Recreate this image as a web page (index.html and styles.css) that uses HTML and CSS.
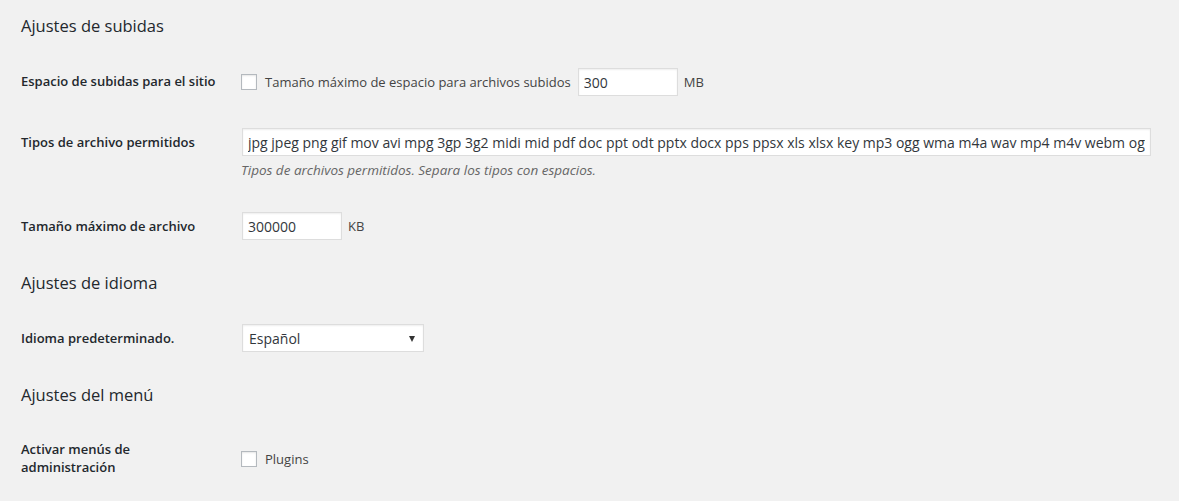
FILE: index.html
```html
<!DOCTYPE html>
<html lang="es">
<head>
<meta charset="utf-8">
<title>Ajustes de la red</title>
<link rel="stylesheet" href="styles.css">
</head>
<body>
<div class="wrap">
  <h2 class="section-title first">Ajustes de subidas</h2>
  <div class="form-table">
    <div class="row row-space">
      <div class="th">Espacio de subidas para el sitio</div>
      <div class="td td-inline">
        <label class="check-label"><input type="checkbox" class="checkbox"> Tamaño máximo de espacio para archivos subidos</label>
        <input type="text" class="text-input small" value="300">
        <span class="unit">MB</span>
      </div>
    </div>
    <div class="row row-types">
      <div class="th">Tipos de archivo permitidos</div>
      <div class="td">
        <input type="text" class="text-input large" value="jpg jpeg png gif mov avi mpg 3gp 3g2 midi mid pdf doc ppt odt pptx docx pps ppsx xls xlsx key mp3 ogg wma m4a wav mp4 m4v webm ogv wmv flv">
        <p class="description">Tipos de archivos permitidos. Separa los tipos con espacios.</p>
      </div>
    </div>
    <div class="row">
      <div class="th">Tamaño máximo de archivo</div>
      <div class="td td-inline">
        <input type="text" class="text-input small" value="300000">
        <span class="unit">KB</span>
      </div>
    </div>
  </div>

  <h2 class="section-title">Ajustes de idioma</h2>
  <div class="form-table">
    <div class="row">
      <div class="th">Idioma predeterminado.</div>
      <div class="td td-inline">
        <span class="select-wrap">
          <select class="select">
            <option>Español</option>
          </select>
          <span class="select-arrow"></span>
        </span>
      </div>
    </div>
  </div>

  <h2 class="section-title">Ajustes del menú</h2>
  <div class="form-table">
    <div class="row row-center">
      <div class="th">Activar menús de administración</div>
      <div class="td td-inline">
        <label class="check-label"><input type="checkbox" class="checkbox"> Plugins</label>
      </div>
    </div>
  </div>
</div>
</body>
</html>
```

FILE: styles.css
```css
html, body {
  margin: 0;
  padding: 0;
  background: #f1f1f1;
}

body {
  font-family: "Segoe UI", "Open Sans", "Noto Sans", sans-serif;
  font-size: 13px;
  line-height: 18px;
  color: #444;
}

.wrap {
  padding: 0 10px 0 21px;
}

.section-title {
  font-size: 16.5px;
  line-height: 23px;
  font-weight: 400;
  color: #23282d;
  margin: 14px 0 15px;
}

.form-table {
  display: flex;
  flex-direction: column;
}

.row {
  display: grid;
  grid-template-columns: 210px 1fr;
  min-height: 60px;
}

.th {
  width: 200px;
  padding: 20px 10px 20px 0;
  font-weight: 600;
  color: #23282d;
}

.td {
  padding: 15px 10px;
}

.td-inline {
  display: flex;
  align-items: center;
  align-self: start;
  height: 28px;
}

.row-space .td-inline {
  padding-top: 16px;
  padding-bottom: 17px;
}

.row-types .td {
  padding-bottom: 18px;
}

.row-center .th {
  padding-top: 20px;
  line-height: 17.7px;
}

.row-center .td-inline {
  align-self: start;
  padding-top: 24px;
  padding-bottom: 8px;
}

.check-label {
  display: inline-flex;
  align-items: center;
  color: #444;
}

.checkbox {
  appearance: none;
  -webkit-appearance: none;
  width: 16px;
  height: 16px;
  margin: 0 8px 0 0;
  border: 1px solid #b4b9be;
  background: #fff;
  box-shadow: inset 0 1px 2px rgba(0, 0, 0, 0.1);
  box-sizing: border-box;
}

.text-input {
  box-sizing: border-box;
  height: 28px;
  margin: 0 0 0 1px;
  padding: 3px 5px;
  border: 1px solid #ddd;
  background: #fff;
  box-shadow: inset 0 1px 2px rgba(0, 0, 0, 0.07);
  font-family: inherit;
  font-size: 14px;
  color: #32373c;
  outline: none;
}

.check-label + .text-input {
  margin-left: 7px;
}

.text-input.small {
  width: 100px;
}

.text-input.large {
  display: block;
  width: 99%;
}

.unit {
  margin-left: 6px;
  color: #444;
}

.description {
  margin: 5px 0 0;
  font-size: 13.5px;
  font-style: italic;
  color: #666;
}

.select-wrap {
  position: relative;
  display: inline-block;
  margin-left: 1px;
}

.select {
  appearance: none;
  -webkit-appearance: none;
  box-sizing: border-box;
  width: 182px;
  height: 28px;
  margin: 0;
  padding: 2px 24px 2px 6px;
  border: 1px solid #ddd;
  border-radius: 0;
  background: #fff;
  box-shadow: inset 0 1px 2px rgba(0, 0, 0, 0.07);
  font-family: inherit;
  font-size: 14px;
  color: #32373c;
  display: block;
}

.select-arrow {
  position: absolute;
  right: 9px;
  top: 12px;
  width: 0;
  height: 0;
  border-left: 3.5px solid transparent;
  border-right: 3.5px solid transparent;
  border-top: 6px solid #333;
}
```
